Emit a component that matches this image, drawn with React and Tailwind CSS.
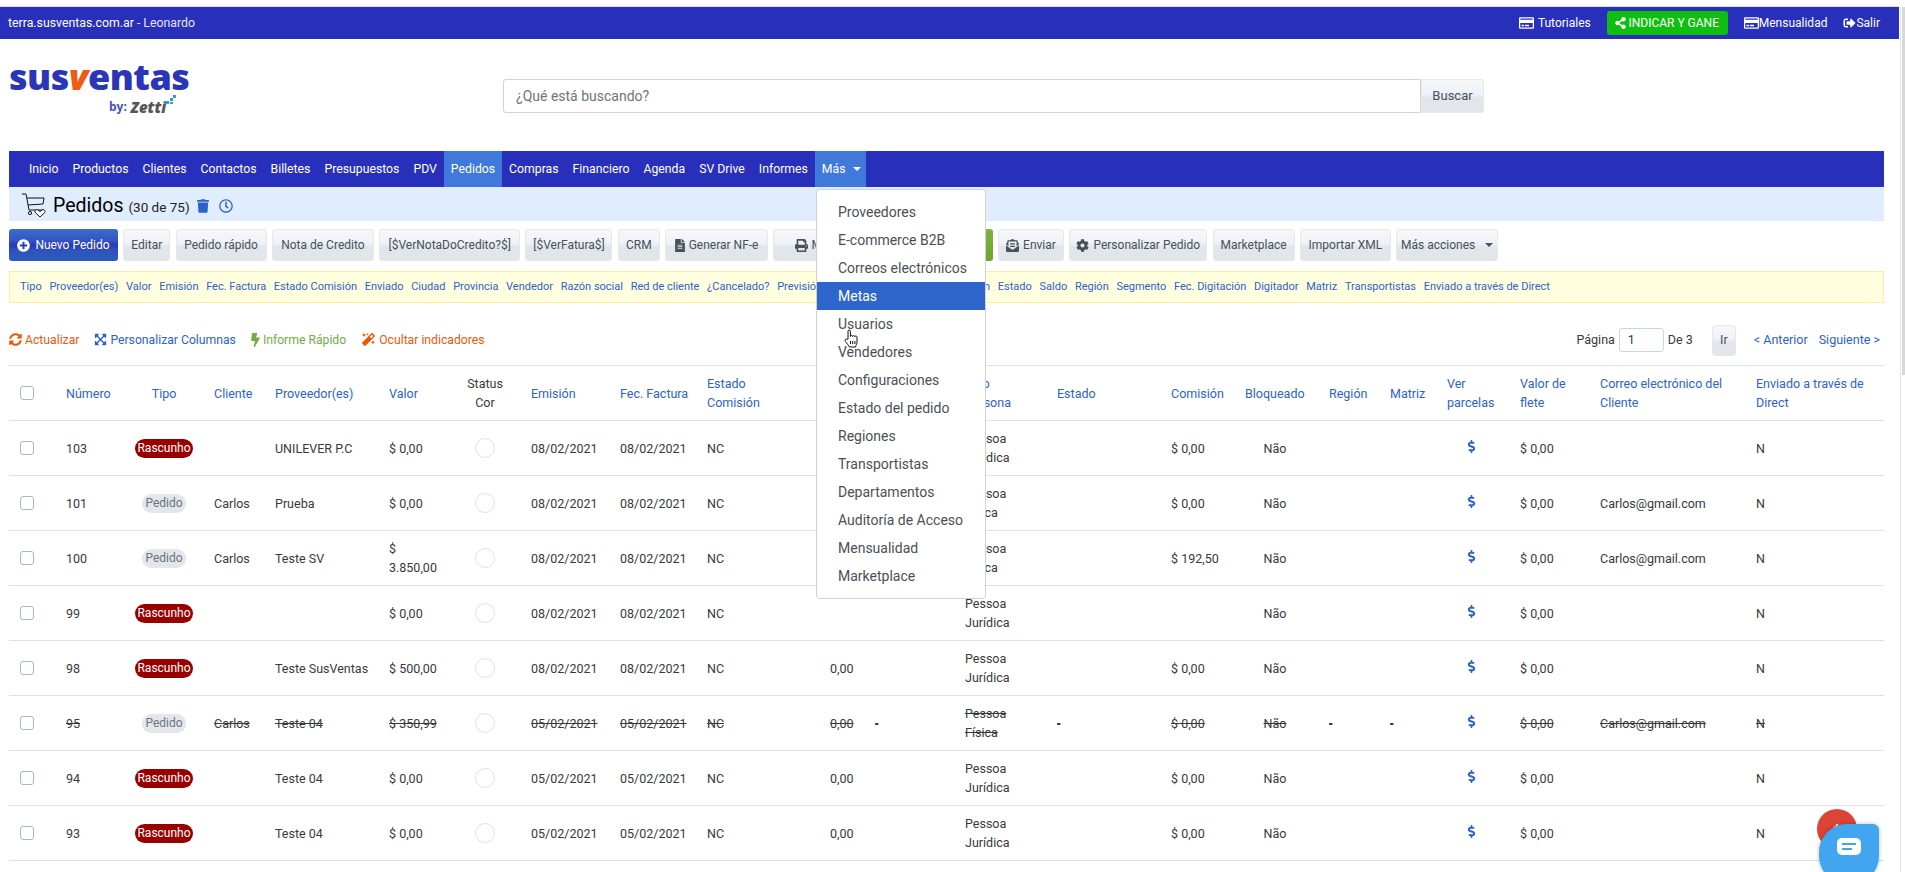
import {
    FaRegCreditCard, FaShareAlt, FaSignOutAlt, FaTrash, FaRegClock, FaPlusCircle, FaFileAlt, FaPrint,
    FaEnvelopeOpenText, FaCog, FaSyncAlt, FaExpandArrowsAlt, FaBolt, FaMagic, FaDollarSign,
} from 'react-icons/fa';

const navItems = ['Inicio', 'Productos', 'Clientes', 'Contactos', 'Billetes', 'Presupuestos', 'PDV', 'Pedidos', 'Compras', 'Financiero', 'Agenda', 'SV Drive', 'Informes'];

const menuItems = ['Proveedores', 'E-commerce B2B', 'Correos electrónicos', 'Metas', 'Usuarios', 'Vendedores', 'Configuraciones', 'Estado del pedido', 'Regiones', 'Transportistas', 'Departamentos', 'Auditoría de Acceso', 'Mensualidad', 'Marketplace'];

const filters = ['Tipo', 'Proveedor(es)', 'Valor', 'Emisión', 'Fec. Factura', 'Estado Comisión', 'Enviado', 'Ciudad', 'Provincia', 'Vendedor', 'Razón social', 'Red de cliente', '¿Cancelado?', 'Previsión de entrega', 'Forma de Liquidación', 'Estado', 'Saldo', 'Región', 'Segmento', 'Fec. Digitación', 'Digitador', 'Matriz', 'Transportistas', 'Enviado a través de Direct'];

const rows = [
    { num: '103', tipo: 'Rascunho', prov: 'UNILEVER P.C', valor: '$ 0,00', em: '08/02/2021', persona: ['Pessoa', 'Jurídica'], com: '$ 0,00', mail: '' },
    { num: '101', tipo: 'Pedido', cli: 'Carlos', prov: 'Prueba', valor: '$ 0,00', em: '08/02/2021', persona: ['Pessoa', 'Física'], com: '$ 0,00', mail: 'Carlos@gmail.com' },
    { num: '100', tipo: 'Pedido', cli: 'Carlos', prov: 'Teste SV', valor: '$ 3.850,00', em: '08/02/2021', persona: ['Pessoa', 'Física'], com: '$ 192,50', mail: 'Carlos@gmail.com' },
    { num: '99', tipo: 'Rascunho', prov: '', valor: '$ 0,00', em: '08/02/2021', persona: ['Pessoa', 'Jurídica'], com: '', mail: '' },
    { num: '98', tipo: 'Rascunho', prov: 'Teste SusVentas', valor: '$ 500,00', em: '08/02/2021', cero: true, persona: ['Pessoa', 'Jurídica'], com: '$ 0,00', mail: '' },
    { num: '95', tipo: 'Pedido', cli: 'Carlos', prov: 'Teste 04', valor: '$ 350,99', em: '05/02/2021', cero: true, persona: ['Pessoa', 'Física'], com: '$ 0,00', mail: 'Carlos@gmail.com', canceled: true },
    { num: '94', tipo: 'Rascunho', prov: 'Teste 04', valor: '$ 0,00', em: '05/02/2021', cero: true, persona: ['Pessoa', 'Jurídica'], com: '$ 0,00', mail: '' },
    { num: '93', tipo: 'Rascunho', prov: 'Teste 04', valor: '$ 0,00', em: '05/02/2021', cero: true, persona: ['Pessoa', 'Jurídica'], com: '$ 0,00', mail: '' },
];

function Btn({ w, h = 'h-8', icon, children }) {
    return (
        <button className={`${w} ${h} shrink-0 flex items-center justify-center gap-1 rounded-[3px] border border-[#e6e8ea] text-[#495057] bg-[linear-gradient(180deg,#f7f7f7_0%,#eef3fb_40%,#e9f0fb_48%,#e2e6ea_56%,#e2e6ea_100%)]`}>
            {icon}
            {children}
        </button>
    );
}

function Check() {
    return <span className="block w-[14px] h-[14px] rounded-[3px] border border-[#adb5bd] bg-white" />;
}

function Badge({ tipo }) {
    if (tipo === 'Rascunho') {
        return <span className="inline-block w-[58px] h-[19px] leading-[19px] rounded-full bg-[#990000] text-white text-[12px] text-center">Rascunho</span>;
    }
    return <span className="inline-block w-[44px] h-[19px] leading-[19px] rounded-full bg-[#e3e6ea] text-[#6c757d] text-[12px] text-center">Pedido</span>;
}

function CartIcon() {
    return (
        <svg width="24" height="25" viewBox="0 0 24 25" fill="none" stroke="#111" strokeWidth="1">
            <path d="M0 1h4l3 16h15" />
            <path d="M5 5h17l-1 6-15 1" />
            <circle cx="8" cy="20" r="1.6" />
            <path d="M18 24l-4.5-4.2c-1.6-1.8.8-4.2 2.6-2.6l1.9 1.4 1.9-1.4c1.8-1.6 4.2.8 2.6 2.6z" fill="#fff" />
        </svg>
    );
}

function HandCursor() {
    return (
        <svg width="16" height="19" viewBox="0 0 16 19" fill="#fff" stroke="#111" strokeWidth="1" className="absolute left-[27px] top-[139px]">
            <path d="M4 10V2.2c0-1.6 2.4-1.6 2.4 0V7.5c0-1.4 2.2-1.4 2.2 0 0-1.2 2.2-1.2 2.2.2 0-1 2.2-1 2.2.4v4.9c0 2-1 3-1.500 5H5.500C4.500 16 2.600 14.500 1.300 12.300.400 10.700 2 9.500 3 10.500z" />
            <path d="M6.500 12v3M8.700 12v3M10.900 12v3" />
        </svg>
    );
}

export default function App() {
    const th = 'px-3 font-normal text-[#2d62c9] leading-[19px]';
    const td = 'px-3 leading-[19px]';

    return (
        <div className="relative h-[872px] w-[1905px] overflow-hidden bg-white text-[13px] text-[#343a40] font-['Roboto',sans-serif]">
            <div className="h-[7px] border-b border-[#dddddd] w-[1899px]" />
            {/* Barra superior */}
            <div className="flex h-8 w-[1899px] items-center justify-between bg-[#282fbb] pl-2 pr-[19px] text-[12px] text-white">
                <span className="text-[12.300px]">terra.susventas.com.ar <span className="text-[#e4e6f5]">- Leonardo</span></span>
                <div className="flex items-center">
                    <FaRegCreditCard className="h-[14px] w-[15px]" />
                    <span className="ml-1">Tutoriales</span>
                    <span className="ml-4 flex h-6 w-[121px] items-center justify-center gap-[2px] rounded-[3px] bg-[#0fbf0f]"><FaShareAlt className="h-[12px] w-[11px]" />INDICAR Y GANE</span>
                    <FaRegCreditCard className="ml-4 h-[14px] w-[15px]" />
                    <span>Mensualidad</span>
                    <FaSignOutAlt className="ml-4 h-[12px] w-[13px]" />
                    <span>Salir</span>
                </div>
            </div>

            {/* Logo y buscador */}
            <div className="flex h-[112px] items-start pl-[9px]">
                <div className="w-[180px] pt-[23px] font-['Open_Sans',sans-serif]">
                    <div className="flex h-[30px] items-center text-[36px] font-extrabold leading-[30px] tracking-[-0.5px] text-[#2a35b8]">
                        sus<span className="italic text-[#f05a14]">v</span>entas
                    </div>
                    <div className="mt-[3px] flex items-end pl-[100px]">
                        <span className="text-[12px] font-bold leading-[16px] text-[#3f55c0]">by:</span>
                        <span className="ml-1 text-[15px] font-extrabold italic leading-[16px] text-[#555555]">Zetti</span>
                        <svg width="12" height="10" viewBox="0 0 12 10" fill="#2aa0e0" className="mb-[10px] -ml-px">
                            <rect x="0" y="6" width="4" height="3" />
                            <rect x="5" y="3" width="3" height="3" />
                            <rect x="8" y="0" width="3" height="3" />
                            <rect x="5" y="7" width="3" height="2" />
                        </svg>
                    </div>
                </div>
                <div className="ml-[314px] mt-10 flex h-[34px]">
                    <div className="flex w-[918px] items-center rounded-l-[3px] border border-[#ced4da] pl-3 text-[14px] text-[#6c757d]">¿Qué está buscando?</div>
                    <button className="h-[34px] w-[63px] rounded-r-[3px] border border-[#e6e8ea] text-[#495057] bg-[linear-gradient(180deg,#f7f7f7_0%,#eef3fb_40%,#e9f0fb_48%,#e2e6ea_56%,#e2e6ea_100%)]">Buscar</button>
                </div>
            </div>

            {/* Menu */}
            <nav className="ml-[9px] flex h-9 w-[1875px] items-center bg-[#282fbb] pl-[13px] text-[12.250px] text-white">
                {navItems.map((item) => (
                    <span key={item} className={`flex h-9 items-center px-[7px] ${item === 'Pedidos' ? 'bg-[#3f79db]' : ''}`}>{item}</span>
                ))}
                <span className="flex h-9 w-[51px] items-center gap-[7px] bg-[#3f79db] pl-[7px]">
                    Más
                    <span className="h-0 w-0 border-x-[4px] border-t-[4px] border-x-transparent border-t-white" />
                </span>
            </nav>

            {/* Titulo */}
            <div className="ml-[9px] flex h-[34px] w-[1875px] items-center bg-[#e0edff] pl-[13px] pt-[3px] text-black">
                <CartIcon />
                <span className="ml-[7px] text-[19.500px] leading-none">Pedidos</span>
                <span className="ml-[5px] mt-[3px] text-[13.500px] text-[#222222]">(30 de 75)</span>
                <FaTrash className="ml-[7px] h-[14px] w-[12px] text-[#2d62c9]" />
                <FaRegClock className="ml-[10px] h-[14px] w-[14px] text-[#2d62c9]" />
            </div>

            {/* Botones */}
            <div className="ml-[9px] mt-2 flex gap-[5.300px] text-[12px]">
                <button className="flex h-8 w-[109px] items-center justify-center gap-[5px] rounded-[3px] text-white bg-[linear-gradient(180deg,#3a6ccb_0%,#3556c4_35%,#2838b8_50%,#2d52bc_65%,#2e5cbf_100%)]">
                    <FaPlusCircle className="h-[13px] w-[13px]" />Nuevo Pedido
                </button>
                <Btn w="w-[47px]">Editar</Btn>
                <Btn w="w-[91px]">Pedido rápido</Btn>
                <Btn w="w-[102px]">Nota de Credito</Btn>
                <Btn w="w-[141px]">[$VerNotaDoCredito?$]</Btn>
                <Btn w="w-[87px]">[$VerFatura$]</Btn>
                <Btn w="w-[42px]">CRM</Btn>
                <Btn w="w-[103px]" icon={<FaFileAlt className="h-[13px] w-[10px]" />}>Generar NF-e</Btn>
                <Btn w="w-[110px]" icon={<FaPrint className="h-[13px] w-[13px]" />}>Modificar</Btn>
                <button className="h-8 w-[104px] shrink-0 rounded-[3px] bg-[linear-gradient(180deg,#7cb342_0%,#6aa62f_100%)] text-white">Aprobar</button>
                <Btn w="w-[66px]" icon={<FaEnvelopeOpenText className="h-[13px] w-[13px]" />}>Enviar</Btn>
                <Btn w="w-[138px]" icon={<FaCog className="h-[13px] w-[13px]" />}>Personalizar Pedido</Btn>
                <Btn w="w-[82px]">Marketplace</Btn>
                <Btn w="w-[91px]">Importar XML</Btn>
                <Btn w="w-[102px]">
                    Más acciones
                    <span className="ml-[6px] h-0 w-0 border-x-[4px] border-t-[4px] border-x-transparent border-t-[#495057]" />
                </Btn>
            </div>

            {/* Indicadores */}
            <div className="ml-[9px] mt-[10px] flex h-8 w-[1875px] items-center gap-[7.700px] border border-[#ffec99] bg-[#ffffe0] pl-[10px] text-[11px] text-[#2d62c9]">
                {filters.map((f) => <span key={f}>{f}</span>)}
            </div>

            {/* Acciones */}
            <div className="ml-[9px] flex h-[62px] w-[1875px] items-center justify-between pr-1 pt-3 text-[12.200px]">
                <div className="flex items-center">
                    <FaSyncAlt className="h-[13px] w-[13px] text-[#e8590c]" />
                    <span className="ml-[3px] text-[#e8590c]">Actualizar</span>
                    <FaExpandArrowsAlt className="ml-[15px] h-[13px] w-[13px] text-[#2d62c9]" />
                    <span className="ml-[3px] text-[#2d62c9]">Personalizar Columnas</span>
                    <FaBolt className="ml-[15px] h-[14px] w-[9px] text-[#70ad47]" />
                    <span className="ml-[3px] text-[#70ad47]">Informe Rápido</span>
                    <FaMagic className="ml-[16px] h-[13px] w-[13px] text-[#e8590c]" />
                    <span className="ml-[4px] text-[#e8590c]">Ocultar indicadores</span>
                </div>
                <div className="flex items-center text-[12.500px]">
                    <span>Página</span>
                    <span className="ml-1 flex h-6 w-[45px] items-center rounded-[3px] border border-[#ced4da] pl-2">1</span>
                    <span className="ml-1">De 3</span>
                    <Btn w="ml-[19px] w-[24px]" h="h-[31px]">Ir</Btn>
                    <span className="ml-[18px] text-[#2d62c9]">&lt; Anterior</span>
                    <span className="ml-[11px] text-[#2d62c9]">Siguiente &gt;</span>
                </div>
            </div>

            {/* Tabla */}
            <table className="ml-[9px] w-[1875px] table-fixed border-collapse border-t border-[#dee2e6] text-[12.500px]">
                <colgroup>
                    <col className="w-[45px]" />
                    <col className="w-[72px]" />
                    <col className="w-[76px]" />
                    <col className="w-[61px]" />
                    <col className="w-[114px]" />
                    <col className="w-[74px]" />
                    <col className="w-[68px]" />
                    <col className="w-[89px]" />
                    <col className="w-[87px]" />
                    <col className="w-[123px]" />
                    <col className="w-[45px]" />
                    <col className="w-[90px]" />
                    <col className="w-[92px]" />
                    <col className="w-[114px]" />
                    <col className="w-[74px]" />
                    <col className="w-[84px]" />
                    <col className="w-[61px]" />
                    <col className="w-[57px]" />
                    <col className="w-[73px]" />
                    <col className="w-[80px]" />
                    <col className="w-[156px]" />
                    <col className="w-[140px]" />
                </colgroup>
                <thead>
                    <tr className="h-[55px] border-b border-[#dee2e6]">
                        <th className="pl-[11px]"><Check /></th>
                        <th className={`${th} text-left`}>Número</th>
                        <th className={`${th} text-center`}>Tipo</th>
                        <th className={`${th} text-left`}>Cliente</th>
                        <th className={`${th} text-left`}>Proveedor(es)</th>
                        <th className={`${th} text-left`}>Valor</th>
                        <th className="text-center font-normal leading-[19px]">Status<br />Cor</th>
                        <th className={`${th} text-left`}>Emisión</th>
                        <th className={`${th} text-left whitespace-nowrap`}>Fec. Factura</th>
                        <th className={`${th} text-left`}>Estado<br />Comisión</th>
                        <th className={`${th} text-left`}>Total</th>
                        <th className={`${th} text-left`}>Ciudad</th>
                        <th className={`${th} text-left`}>Tipo<br />Persona</th>
                        <th className={`${th} text-left`}>Estado</th>
                        <th className={`${th} text-left`}>Comisión</th>
                        <th className={`${th} text-left`}>Bloqueado</th>
                        <th className={`${th} text-left`}>Región</th>
                        <th className={`${th} text-left`}>Matriz</th>
                        <th className={`${th} text-left`}>Ver<br />parcelas</th>
                        <th className={`${th} text-left`}>Valor de flete</th>
                        <th className={`${th} text-left`}>Correo electrónico del Cliente</th>
                        <th className={`${th} text-left`}>Enviado a través de Direct</th>
                    </tr>
                </thead>
                <tbody>
                    {rows.map((r) => {
                        const strike = r.canceled ? 'line-through' : '';
                        return (
                            <tr key={r.num} className={`h-[55px] border-b border-[#dee2e6] ${strike}`}>
                                <td className="pl-[11px]"><Check /></td>
                                <td className={td}>{r.num}</td>
                                <td className="text-center"><Badge tipo={r.tipo} /></td>
                                <td className={td}>{r.cli}</td>
                                <td className={`${td} whitespace-nowrap`}>{r.prov}</td>
                                <td className={td}>{r.valor}</td>
                                <td><span className="mx-auto block h-5 w-5 rounded-full border border-[#dee2e6]" /></td>
                                <td className={td}>{r.em}</td>
                                <td className={td}>{r.em}</td>
                                <td className={td}>NC</td>
                                <td className={td}>{r.cero ? '0,00' : ''}</td>
                                <td className={td}>{r.canceled ? '-' : ''}</td>
                                <td className={td}>{r.persona[0]}<br />{r.persona[1]}</td>
                                <td className={td}>{r.canceled ? '-' : ''}</td>
                                <td className={td}>{r.com}</td>
                                <td className={`${td} text-center`}>Não</td>
                                <td className={td}>{r.canceled ? '-' : ''}</td>
                                <td className={td}>{r.canceled ? '-' : ''}</td>
                                <td><FaDollarSign className="mx-auto mb-1 h-[13px] w-[9px] text-[#2d62c9]" /></td>
                                <td className={td}>$ 0,00</td>
                                <td className={td}>{r.mail}</td>
                                <td className={td}>N</td>
                            </tr>
                        );
                    })}
                </tbody>
            </table>

            {/* Dropdown Mas */}
            <div className="absolute left-[816px] top-[189px] w-[170px] rounded-[4px] border border-[#cfd3d8] bg-white py-2 text-[14px] text-[#495057]">
                {menuItems.map((m) => (
                    <div key={m} className={`flex h-7 items-center pl-[21px] ${m === 'Metas' ? 'bg-[#2f66cc] text-white' : ''}`}>{m}</div>
                ))}
                <HandCursor />
            </div>

            {/* Barra de scroll */}
            <div className="absolute right-0 top-[7px] h-[865px] w-[5px] border-l border-[#e3e3e3] bg-white">
                <div className="ml-[1px] h-[368px] w-[3px] bg-[#d8d8d8]" />
            </div>

            {/* Widgets flotantes */}
            <div className="absolute left-[1817px] top-[809px] flex h-10 w-10 justify-center rounded-full bg-[#dc4437] pt-[12px] text-[13px] font-bold leading-none text-white">+</div>
            <div className="absolute left-[1819px] top-[824px] flex h-[60px] w-[60px] items-center justify-center rounded-[28px] rounded-tr-[6px] bg-[#42a5f0] pb-[14px] shadow-[0_0_4px_rgba(0,0,0,0.25)]">
                <svg width="24" height="18" viewBox="0 0 24 18">
                    <rect width="24" height="17" rx="5" fill="#fff" />
                    <path d="M5 6h14M5 11h10" stroke="#42a5f0" strokeWidth="2" />
                </svg>
            </div>
        </div>
    );
}
